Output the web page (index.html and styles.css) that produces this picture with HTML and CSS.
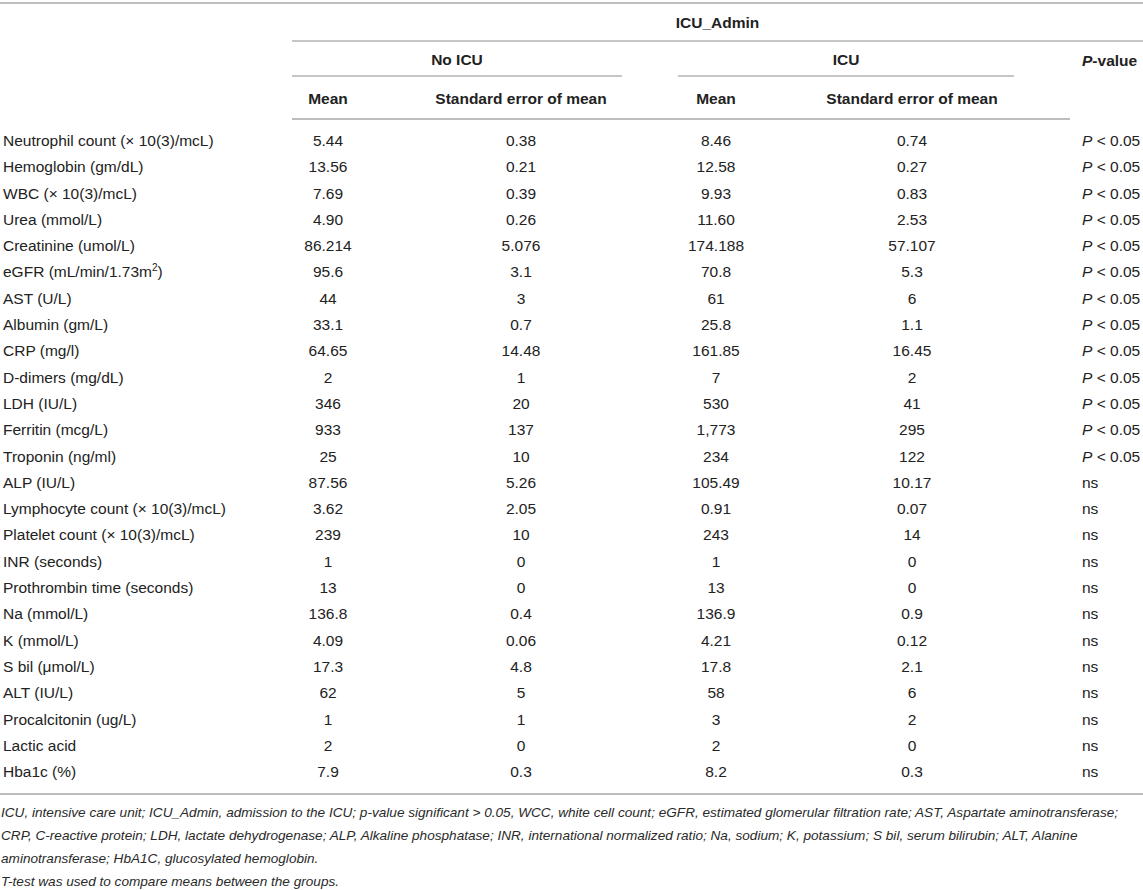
FILE: index.html
```html
<!DOCTYPE html>
<html>
<head>
<meta charset="utf-8">
<link rel="stylesheet" href="styles.css">
</head>
<body>
<div class="page">
<table class="tbl">
<colgroup>
<col class="c1"><col class="c2"><col class="c3"><col class="c4"><col class="c5"><col class="c6">
</colgroup>
<thead>
<tr class="h1">
<th rowspan="3"></th>
<th colspan="5" class="admin">ICU_Admin</th>
</tr>
<tr class="h2">
<th colspan="2" class="grp"><div class="grp-in">No ICU</div></th>
<th colspan="2" class="grp"><div class="grp-in">ICU</div></th>
<th rowspan="2" class="pv"><i>P</i>-value</th>
</tr>
<tr class="h3">
<th>Mean</th><th>Standard error of mean</th><th>Mean</th><th>Standard error of mean</th>
</tr>
</thead>
<tbody>
<tr><td>Neutrophil count (× 10(3)/mcL)</td><td>5.44</td><td>0.38</td><td>8.46</td><td>0.74</td><td><i>P</i> &lt; 0.05</td></tr>
<tr><td>Hemoglobin (gm/dL)</td><td>13.56</td><td>0.21</td><td>12.58</td><td>0.27</td><td><i>P</i> &lt; 0.05</td></tr>
<tr><td>WBC (× 10(3)/mcL)</td><td>7.69</td><td>0.39</td><td>9.93</td><td>0.83</td><td><i>P</i> &lt; 0.05</td></tr>
<tr><td>Urea (mmol/L)</td><td>4.90</td><td>0.26</td><td>11.60</td><td>2.53</td><td><i>P</i> &lt; 0.05</td></tr>
<tr><td>Creatinine (umol/L)</td><td>86.214</td><td>5.076</td><td>174.188</td><td>57.107</td><td><i>P</i> &lt; 0.05</td></tr>
<tr><td>eGFR (mL/min/1.73m<sup>2</sup>)</td><td>95.6</td><td>3.1</td><td>70.8</td><td>5.3</td><td><i>P</i> &lt; 0.05</td></tr>
<tr><td>AST (U/L)</td><td>44</td><td>3</td><td>61</td><td>6</td><td><i>P</i> &lt; 0.05</td></tr>
<tr><td>Albumin (gm/L)</td><td>33.1</td><td>0.7</td><td>25.8</td><td>1.1</td><td><i>P</i> &lt; 0.05</td></tr>
<tr><td>CRP (mg/l)</td><td>64.65</td><td>14.48</td><td>161.85</td><td>16.45</td><td><i>P</i> &lt; 0.05</td></tr>
<tr><td>D-dimers (mg/dL)</td><td>2</td><td>1</td><td>7</td><td>2</td><td><i>P</i> &lt; 0.05</td></tr>
<tr><td>LDH (IU/L)</td><td>346</td><td>20</td><td>530</td><td>41</td><td><i>P</i> &lt; 0.05</td></tr>
<tr><td>Ferritin (mcg/L)</td><td>933</td><td>137</td><td>1,773</td><td>295</td><td><i>P</i> &lt; 0.05</td></tr>
<tr><td>Troponin (ng/ml)</td><td>25</td><td>10</td><td>234</td><td>122</td><td><i>P</i> &lt; 0.05</td></tr>
<tr><td>ALP (IU/L)</td><td>87.56</td><td>5.26</td><td>105.49</td><td>10.17</td><td>ns</td></tr>
<tr><td>Lymphocyte count (× 10(3)/mcL)</td><td>3.62</td><td>2.05</td><td>0.91</td><td>0.07</td><td>ns</td></tr>
<tr><td>Platelet count (× 10(3)/mcL)</td><td>239</td><td>10</td><td>243</td><td>14</td><td>ns</td></tr>
<tr><td>INR (seconds)</td><td>1</td><td>0</td><td>1</td><td>0</td><td>ns</td></tr>
<tr><td>Prothrombin time (seconds)</td><td>13</td><td>0</td><td>13</td><td>0</td><td>ns</td></tr>
<tr><td>Na (mmol/L)</td><td>136.8</td><td>0.4</td><td>136.9</td><td>0.9</td><td>ns</td></tr>
<tr><td>K (mmol/L)</td><td>4.09</td><td>0.06</td><td>4.21</td><td>0.12</td><td>ns</td></tr>
<tr><td>S bil (μmol/L)</td><td>17.3</td><td>4.8</td><td>17.8</td><td>2.1</td><td>ns</td></tr>
<tr><td>ALT (IU/L)</td><td>62</td><td>5</td><td>58</td><td>6</td><td>ns</td></tr>
<tr><td>Procalcitonin (ug/L)</td><td>1</td><td>1</td><td>3</td><td>2</td><td>ns</td></tr>
<tr><td>Lactic acid</td><td>2</td><td>0</td><td>2</td><td>0</td><td>ns</td></tr>
<tr><td>Hba1c (%)</td><td>7.9</td><td>0.3</td><td>8.2</td><td>0.3</td><td>ns</td></tr>
</tbody>
</table>
<div class="notes">
<p class="note">ICU, intensive care unit; ICU_Admin, admission to the ICU; p-value significant &gt; 0.05, WCC, white cell count; eGFR, estimated glomerular filtration rate; AST, Aspartate aminotransferase;<br>CRP, C-reactive protein; LDH, lactate dehydrogenase; ALP, Alkaline phosphatase; INR, international normalized ratio; Na, sodium; K, potassium; S bil, serum bilirubin; ALT, Alanine<br>aminotransferase; HbA1C, glucosylated hemoglobin.</p>
<p class="note">T-test was used to compare means between the groups.</p>
</div>
</div>
</body>
</html>
```

FILE: styles.css
```css
html, body {
  margin: 0;
  padding: 0;
  background: #ffffff;
}
.page {
  width: 1143px;
  padding-top: 2px;
  font-family: "Liberation Sans", Arial, sans-serif;
  color: #222222;
}
.tbl {
  width: 1143px;
  border-collapse: collapse;
  table-layout: fixed;
  font-size: 15.5px;
  border-top: 2px solid #bdbdbd;
  border-bottom: 2px solid #bdbdbd;
}
.c1 { width: 292px; }
.c2 { width: 72px; }
.c3 { width: 314px; }
.c4 { width: 76px; }
.c5 { width: 316px; }
.c6 { width: 73px; }
.tbl th {
  font-weight: bold;
  text-align: center;
  padding: 0;
  line-height: 17px;
}
.h1 th { height: 36px; }
.admin {
  border-bottom: 2px solid #c6c6c6;
}
.h2 th { height: 36px; vertical-align: top; }
.grp { padding: 0; }
.grp-in {
  margin-right: 56px;
  height: 35px;
  box-sizing: border-box;
  padding-top: 9px;
  border-bottom: 2px solid #c6c6c6;
}
.tbl th.pv {
  vertical-align: top;
  padding-top: 10px;
  text-align: left;
  padding-left: 12px;
}
.h3 th {
  height: 40px;
  border-bottom: 2px solid #bdbdbd;
}
.tbl td {
  padding: 5px 0;
  line-height: 16.3px;
  text-align: center;
  white-space: nowrap;
}
.tbl td:first-child {
  text-align: left;
  padding-left: 3px;
}
.tbl td:last-child {
  text-align: left;
  padding-left: 12px;
}
.tbl tbody tr:first-child td { padding-top: 13px; }
.tbl tbody tr:last-child td { padding-bottom: 13px; }
sup {
  font-size: 10px;
  line-height: 0;
  vertical-align: 6px;
}
.notes {
  padding-top: 6px;
}
.note {
  margin: 0;
  font-style: italic;
  font-size: 13.6px;
  line-height: 23px;
  color: #2a2a2a;
  white-space: nowrap;
  padding-left: 1px;
}
```
